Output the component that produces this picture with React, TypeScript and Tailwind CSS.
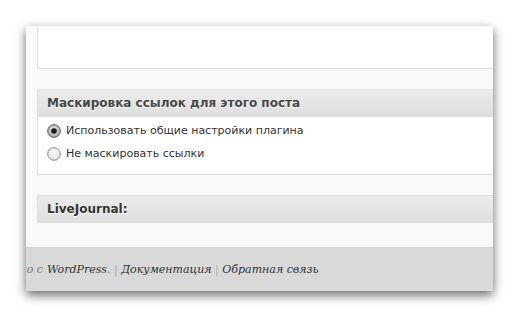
import React from "react";

const sans = { fontFamily: '"DejaVu Sans", Verdana, sans-serif' };
const serif = { fontFamily: '"DejaVu Serif", Georgia, serif' };

function Radio({ checked }: { checked?: boolean }) {
  return (
    <svg width="14" height="14" viewBox="0 0 14 14" className="shrink-0">
      <defs>
        <radialGradient id={checked ? "rgc" : "rgu"} cx="50%" cy="40%" r="60%">
          <stop offset="0%" stopColor={checked ? "#e8e8e8" : "#ffffff"} />
          <stop offset="100%" stopColor={checked ? "#a9a9a9" : "#dcdcdc"} />
        </radialGradient>
      </defs>
      <circle cx="7" cy="7" r="6.3" fill={`url(#${checked ? "rgc" : "rgu"})`} stroke={checked ? "#555" : "#8e8f8f"} strokeWidth="1" />
      {checked && <circle cx="7" cy="7" r="2.8" fill="#1a1a1a" />}
    </svg>
  );
}

export default function App() {
  return (
    <div className="w-[519px] h-[317px] bg-white overflow-hidden pt-[26px] pl-[26px]">
      <div className="w-[467px] h-[265px] bg-[#f9f9f9] overflow-hidden flex flex-col shadow-[0_4px_10px_rgba(0,0,0,0.6)]">
        <div className="pl-[11px] flex flex-col shrink-0">
          <div className="h-[43px] shrink-0 bg-white border-l border-b border-[#dfdfdf] w-[470px]" />
          <div className="h-[20px] shrink-0" />
          <div className="border border-[#dfdfdf] w-[470px] bg-white shrink-0">
            <div
              className="h-[27px] box-border flex items-center pl-[9px] text-[12px] font-bold text-[#464646] bg-gradient-to-b from-[#ececec] to-[#dfdfdf] border-b border-[#dfdfdf] [text-shadow:0_1px_0_#fff]"
              style={sans}
            >
              Маскировка ссылок для этого поста
            </div>
            <div className="flex flex-col gap-[9px] pt-[7px] pb-[13px] pl-[9px] text-[11px] text-[#333]" style={sans}>
              <label className="flex items-center gap-[5px] h-[14px]">
                <Radio checked />
                <span>Использовать общие настройки плагина</span>
              </label>
              <label className="flex items-center gap-[5px] h-[14px]">
                <Radio />
                <span>Не маскировать ссылки</span>
              </label>
            </div>
          </div>
          <div className="h-[20px] shrink-0" />
          <div
            className="h-[28px] shrink-0 w-[470px] border border-[#dfdfdf] flex items-center pl-[9px] text-[12px] font-bold text-[#333] bg-gradient-to-b from-[#ececec] to-[#dfdfdf] [text-shadow:0_1px_0_#fff]"
            style={sans}
          >
            LiveJournal:
          </div>
        </div>
        <div className="h-[24px] shrink-0" />
        <div className="flex-1 bg-[#d9d9d9] border-t border-[#d1d1d1] flex items-center pt-[2px]">
          <div className="flex items-baseline whitespace-nowrap italic text-[11px] text-[#777]" style={serif}>
            <div className="w-[21px] shrink-0 flex justify-end overflow-hidden pr-[4px]">
              <span className="shrink-0">Спасибо за творчество с</span>
            </div>
            <span>
              <span className="text-[#333]">WordPress</span>. <span className="text-[#b0a0a0]">|</span>{" "}
              <span className="text-[#333]">Документация</span> <span className="text-[#a8b0b8]">|</span>{" "}
              <span className="text-[#333]">Обратная связь</span>
            </span>
          </div>
        </div>
      </div>
    </div>
  );
}
